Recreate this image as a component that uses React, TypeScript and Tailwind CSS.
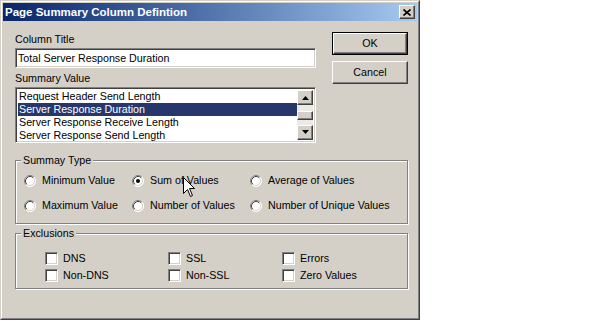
import React from 'react';

const raised =
  'border border-t-white border-l-white border-r-[#404040] border-b-[#404040] shadow-[inset_-1px_-1px_0_#808080]';
const sunken =
  'border border-t-[#808080] border-l-[#808080] border-r-white border-b-white shadow-[inset_1px_1px_0_#404040,inset_-1px_-1px_0_#d4d0c8]';

const Radio: React.FC<{ label: string; checked?: boolean }> = ({ label, checked }) => (
  <div className="flex items-center h-[13px]">
    <svg width="12" height="12" viewBox="0 0 12 12" className="shrink-0">
      <circle cx="6" cy="6" r="5.5" fill="#fff" />
      <path d="M2.11 9.89 A5.5 5.5 0 0 1 9.89 2.11" fill="none" stroke="#808080" />
      <path d="M9.89 2.11 A5.5 5.5 0 0 1 2.11 9.89" fill="none" stroke="#fff" />
      <path d="M2.82 9.18 A4.5 4.5 0 0 1 9.18 2.82" fill="none" stroke="#404040" />
      <path d="M9.18 2.82 A4.5 4.5 0 0 1 2.82 9.18" fill="none" stroke="#d4d0c8" />
      {checked && <circle cx="6" cy="6" r="2" fill="#000" />}
    </svg>
    <span className="ml-[6px] whitespace-nowrap">{label}</span>
  </div>
);

const Check: React.FC<{ label: string }> = ({ label }) => (
  <div className="flex items-center h-[13px]">
    <div className={`w-[13px] h-[13px] shrink-0 bg-white ${sunken}`} />
    <span className="ml-[5px] whitespace-nowrap">{label}</span>
  </div>
);

const Group: React.FC<{ title: string; className: string; children: React.ReactNode }> = ({
  title,
  className,
  children,
}) => (
  <div
    className={`relative border border-[#808080] shadow-[inset_1px_1px_0_#fff,1px_1px_0_#fff] ${className}`}
  >
    <span className="absolute -top-[7px] left-[5px] px-[2px] bg-[#d4d0c8] leading-[13px]">{title}</span>
    {children}
  </div>
);

const Arrow: React.FC<{ up?: boolean }> = ({ up }) => (
  <div className={`w-[16px] h-[16px] bg-[#d4d0c8] flex items-center justify-center ${raised}`}>
    <svg width="7" height="4" viewBox="0 0 7 4">
      <path d={up ? 'M3.5 0 L7 4 L0 4 Z' : 'M0 0 L7 0 L3.5 4 Z'} fill="#000" />
    </svg>
  </div>
);

const items = [
  'Request Header Send Length',
  'Server Response Duration',
  'Server Response Receive Length',
  'Server Response Send Length',
];

export default function App() {
  return (
    <div className="min-h-screen bg-white font-['Liberation_Sans',Arial,sans-serif] text-[10.7px] leading-[13px] text-black">
      <div className="relative w-[420px] h-[320px] bg-[#d4d0c8] border border-t-[#d4d0c8] border-l-[#d4d0c8] border-r-[#404040] border-b-[#404040]">
        <div className="h-full border border-t-white border-l-white border-r-[#808080] border-b-[#808080] p-px flex flex-col">
          {/* title bar */}
          <div className="h-[18px] shrink-0 flex items-center justify-between bg-gradient-to-r from-[#0a246a] to-[#a6caf0] pl-[2px] pr-[2px]">
            <span className="text-white font-bold text-[11.5px]">Page Summary Column Defintion</span>
            <div className={`w-[16px] h-[14px] bg-[#d4d0c8] flex items-center justify-center ${raised}`}>
              <svg width="8" height="7" viewBox="0 0 8 7">
                <path d="M0.5 0.5 L7.5 6.5 M7.5 0.5 L0.5 6.5" stroke="#000" strokeWidth="1.6" />
              </svg>
            </div>
          </div>

          <div className="pl-[12px] pr-[9px] flex flex-col">
            <div className="flex pt-[11px]">
              <div className="w-[301px] flex flex-col">
                <div className="mt-[1px] h-[13px]">Column Title</div>
                <div className={`mt-[2px] h-[20px] bg-white flex items-center pl-[2px] ${sunken}`}>
                  Total Server Response Duration
                </div>
                <div className="mt-[4px] h-[13px]">Summary Value</div>
                <div className={`mt-[2px] h-[56px] bg-white p-[2px] flex ${sunken}`}>
                  <div className="flex-1 flex flex-col">
                    {items.map((t, i) => (
                      <div
                        key={t}
                        className={`h-[13px] pl-[1px] whitespace-nowrap ${
                          i === 1 ? 'bg-[#27376b] text-white' : ''
                        }`}
                      >
                        {t}
                      </div>
                    ))}
                  </div>
                  <div className="w-[16px] flex flex-col">
                    <Arrow up />
                    <div className="h-[20px] bg-[#eceae6] pt-[6px]">
                      <div className={`h-[9px] bg-[#d4d0c8] ${raised}`} />
                    </div>
                    <Arrow />
                  </div>
                </div>
              </div>
              <div className="ml-[16px] flex-1 flex flex-col">
                <div className="h-[23px] border border-black">
                  <div className={`h-full bg-[#d4d0c8] flex items-center justify-center ${raised}`}>OK</div>
                </div>
                <div className={`mt-[6px] h-[23px] bg-[#d4d0c8] flex items-center justify-center ${raised}`}>
                  Cancel
                </div>
              </div>
            </div>

            <Group title="Summay Type" className="mt-[17px] h-[64px] pl-[8px] pt-[13px]">
              <div className="grid grid-cols-[108px_118px_1fr] gap-y-[12px]">
                <Radio label="Minimum Value" />
                <Radio label="Sum of Values" checked />
                <Radio label="Average of Values" />
                <Radio label="Maximum Value" />
                <Radio label="Number of Values" />
                <Radio label="Number of Unique Values" />
              </div>
            </Group>

            <Group title="Exclusions" className="mt-[9px] h-[56px] pl-[29px] pt-[18px]">
              <div className="grid grid-cols-[123px_114px_1fr] gap-y-[4px]">
                <Check label="DNS" />
                <Check label="SSL" />
                <Check label="Errors" />
                <Check label="Non-DNS" />
                <Check label="Non-SSL" />
                <Check label="Zero Values" />
              </div>
            </Group>
          </div>
        </div>

        {/* mouse pointer */}
        <svg className="absolute left-[182px] top-[176px]" width="13" height="21" viewBox="0 0 13 21">
          <path
            d="M0.5 0.5 L0.5 16.5 L4.5 12.5 L7.5 19.5 L9.5 18.5 L6.5 11.5 L11.5 11.5 Z"
            fill="#fff"
            stroke="#000"
            strokeLinejoin="miter"
          />
        </svg>
      </div>
    </div>
  );
}
